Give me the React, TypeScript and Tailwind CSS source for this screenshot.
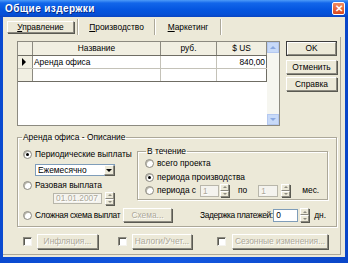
import type { ReactNode } from 'react'

const raised =
  'bg-[#ece9d8] border border-t-white border-l-white border-r-[#8c8a80] border-b-[#8c8a80] shadow-[1px_1px_0_#5a5a52]'
const disabledText = 'text-[#aca899] [text-shadow:1px_1px_0_#ffffff]'

function Radio({ checked, label, className = '' }: { checked?: boolean; label: string; className?: string }) {
  return (
    <div className={'flex items-center h-[11px] ' + className}>
      <span className="w-[9px] h-[9px] shrink-0 rounded-full bg-white border border-[#8c8a80] shadow-[inset_1px_1px_0_#b8b6aa] flex items-center justify-center">
        {checked && <span className="w-[3px] h-[3px] rounded-full bg-black" />}
      </span>
      <span className="ml-[3px] whitespace-nowrap">{label}</span>
    </div>
  )
}

function Check() {
  return (
    <span className="block w-[9px] h-[9px] shrink-0 bg-white border border-t-[#8c8a80] border-l-[#8c8a80] border-r-[#f4f3ee] border-b-[#f4f3ee] shadow-[inset_1px_1px_0_#5a5a52]" />
  )
}

function Spin({ h = 'h-[13px]' }: { h?: string }) {
  return (
    <div className={'w-[9px] flex flex-col ' + h}>
      <div className={'flex-1 flex items-center justify-center ' + raised}>
        <span className="border-x-[2px] border-x-transparent border-b-[2px] border-b-[#8c8a80]" />
      </div>
      <div className={'flex-1 flex items-center justify-center ' + raised}>
        <span className="border-x-[2px] border-x-transparent border-t-[2px] border-t-[#8c8a80]" />
      </div>
    </div>
  )
}

function Btn({ children, disabled, className = '' }: { children: ReactNode; disabled?: boolean; className?: string }) {
  return (
    <div className={'flex items-center justify-center whitespace-nowrap ' + raised + ' ' + (disabled ? disabledText : '') + ' ' + className}>
      {children}
    </div>
  )
}

function Sep() {
  return <div className="w-[2px] h-[16px] border-l border-l-[#aca899] border-r border-r-white" />
}

export default function App() {
  return (
    <div className="w-[348px] h-[263px] overflow-hidden flex flex-col bg-[linear-gradient(to_right,#0a4ad0,#1458e0_50%,#0a46c8)] font-['Liberation_Sans',Arial,sans-serif] text-[8.4px] leading-[11px] text-black">
      {/* title bar */}
      <div className="h-[17px] shrink-0 flex items-center pl-[5px] pr-[3px] bg-[linear-gradient(to_bottom,#4d9bf8_0%,#1266ea_18%,#0556e0_55%,#0650d6_85%,#0a44c0_100%)]">
        <span className="text-white font-bold text-[10px] tracking-[0.4px] [text-shadow:1px_1px_0_#0a2e88]">Общие издержки</span>
        <div className="ml-auto w-[13px] h-[13px] rounded-[2px] border border-white bg-[linear-gradient(to_bottom,#f08a60,#d9471d)] flex items-center justify-center text-white font-bold text-[10px] leading-none">
          ✕
        </div>
      </div>

      <div className="flex-1 mx-[3px] mb-[6px] bg-[#ece9d8] flex flex-col">
        {/* tabs */}
        <div className="h-[20px] shrink-0 flex items-center pl-[4px]">
          <div className={'w-[67px] h-[12px] flex items-center justify-center ' + raised}>
            <span><u>У</u>правление</span>
          </div>
          <div className="w-[3px]" />
          <Sep />
          <div className="w-[75px] text-center"><u>П</u>роизводство</div>
          <Sep />
          <div className="w-[64px] text-center"><u>М</u>аркетинг</div>
          <Sep />
        </div>

        <div className="flex-1 flex flex-col pl-[14px] pt-[4px] border-r border-r-[#aca899] border-b border-b-[#aca899] mr-[4px] mb-[2px]">
          {/* grid + buttons */}
          <div className="flex h-[85px] shrink-0">
            <div className="w-[263px] h-full flex border border-[#8c8a80] bg-white">
              <div className="w-[249px] flex flex-col">
                <div className="h-[14px] flex border-b border-b-[#6f6d64] bg-[#f1efe2]">
                  <div className="w-[15px] border-r border-r-[#8c8a80]" />
                  <div className="w-[128px] border-r border-r-[#8c8a80] text-center leading-[13px]">Название</div>
                  <div className="w-[56px] border-r border-r-[#8c8a80] text-center leading-[13px]">руб.</div>
                  <div className="w-[50px] border-r border-r-[#8c8a80] text-center leading-[13px]">$ US</div>
                </div>
                <div className="h-[13px] flex border-b border-b-[#c4c2b8]">
                  <div className="w-[15px] bg-[#f1efe2] border-r border-r-[#8c8a80] flex items-center pl-[4px]">
                    <span className="border-y-[4px] border-y-transparent border-l-[4px] border-l-black" />
                  </div>
                  <div className="w-[128px] border-r border-r-[#c4c2b8] pl-[1px] leading-[12px]">Аренда офиса</div>
                  <div className="w-[56px] border-r border-r-[#c4c2b8]" />
                  <div className="w-[50px] border-r border-r-[#6f6d64] text-right pr-[1px] leading-[12px]">840,00</div>
                </div>
                <div className="h-[13px] flex border-b border-b-[#6f6d64]">
                  <div className="w-[15px] bg-[#f1efe2] border-r border-r-[#8c8a80]" />
                  <div className="w-[128px] border-r border-r-[#c4c2b8]" />
                  <div className="w-[56px] border-r border-r-[#c4c2b8]" />
                  <div className="w-[50px] border-r border-r-[#6f6d64]" />
                </div>
              </div>
              <div className="w-[12px] flex flex-col bg-[#f6f6f0]">
                <div className="h-[11px] bg-[#c8daf8] border border-[#b4c8f0] flex items-center justify-center">
                  <span className="border-x-[3px] border-x-transparent border-b-[3px] border-b-[#8aa8e0]" />
                </div>
                <div className="flex-1" />
                <div className="h-[11px] bg-[#c8daf8] border border-[#b4c8f0] flex items-center justify-center">
                  <span className="border-x-[3px] border-x-transparent border-t-[3px] border-t-[#8aa8e0]" />
                </div>
              </div>
            </div>
            <div className="ml-[6px] w-[51px] flex flex-col">
              <div className="h-[15px] border border-[#3c3c3c]">
                <Btn className="h-full">OK</Btn>
              </div>
              <Btn className="mt-[4px] h-[14px]">Отменить</Btn>
              <Btn className="mt-[3px] h-[14px]">Справка</Btn>
            </div>
          </div>

          {/* description group */}
          <fieldset className="mt-[6px] w-[320px] min-w-0 border border-[#aca899] shadow-[inset_1px_1px_0_#ffffff,1px_1px_0_#ffffff] pb-[4px]">
            <legend className="ml-[4px] px-[1px]">Аренда офиса - Описание</legend>
            <div className="flex">
              <div className="w-[119px] shrink-0 pl-[5px] flex flex-col">
                <Radio checked label="Периодические выплаты" className="mt-[6px]" />
                <div className="ml-[12px] mt-[4px] w-[80px] h-[12px] flex bg-white border border-[#7f9db9]">
                  <span className="flex-1 pl-[2px] leading-[10px]">Ежемесячно</span>
                  <div className={'w-[10px] flex items-center justify-center ' + raised}>
                    <span className="border-x-[3px] border-x-transparent border-t-[3px] border-t-black" />
                  </div>
                </div>
                <Radio label="Разовая выплата" className="mt-[4px]" />
                <div className="ml-[30px] mt-[1px] flex items-start">
                  <div className={'mt-[1px] w-[49px] h-[11px] border border-[#b8b6aa] bg-[#f4f3ee] pl-[2px] leading-[9px] ' + disabledText}>01.01.2007</div>
                  <div className="ml-[3px]"><Spin /></div>
                </div>
              </div>
              <fieldset className="mt-[3px] w-[191px] min-w-0 shrink-0 border border-[#aca899] shadow-[inset_1px_1px_0_#ffffff,1px_1px_0_#ffffff] pl-[7px] pb-[2px] self-start">
                <legend className="ml-[1px] px-[1px]">В течение</legend>
                <Radio label="всего проекта" className="mt-[1px]" />
                <Radio checked label="периода производства" className="mt-[3px]" />
                <div className="mt-[1px] h-[13px] flex items-center">
                  <Radio label="периода с" />
                  <div className={'ml-[4px] w-[19px] h-[12px] border border-[#b8b6aa] bg-[#f4f3ee] pl-[2px] leading-[10px] ' + disabledText}>1</div>
                  <div className="ml-[1px]"><Spin /></div>
                  <span className="ml-[9px]">по</span>
                  <div className={'ml-[11px] w-[20px] h-[12px] border border-[#b8b6aa] bg-[#f4f3ee] pl-[2px] leading-[10px] ' + disabledText}>1</div>
                  <div className="ml-[3px]"><Spin /></div>
                  <span className="ml-[12px]">мес.</span>
                </div>
              </fieldset>
            </div>
            <div className="mt-[3px] h-[14px] flex items-center pl-[5px]">
              <div className="w-[100px] shrink-0 tracking-[-0.3px]"><Radio label="Сложная схема выплат" /></div>
              <Btn disabled className="w-[49px] h-[14px] shrink-0">Схема...</Btn>
              <span className="ml-[28px] whitespace-nowrap tracking-[-0.4px]">Задержка платежей:</span>
              <div className="ml-auto flex items-center pr-[10px]">
                <div className="w-[25px] h-[13px] bg-white border border-[#7f9db9] pl-[2px] leading-[11px]">0</div>
                <div className="ml-[2px]"><Spin h="h-[14px]" /></div>
                <span className="ml-[5px]">дн.</span>
              </div>
            </div>
          </fieldset>

          {/* bottom options */}
          <div className="mt-[7px] h-[15px] flex items-center pl-[6px]">
            <Check />
            <Btn disabled className="ml-[5px] w-[61px] h-[15px]">Инфляция...</Btn>
            <div className="ml-[20px]"><Check /></div>
            <Btn disabled className="ml-[5px] w-[60px] h-[15px]">Налоги/Учет...</Btn>
            <div className="ml-[25px]"><Check /></div>
            <Btn disabled className="ml-[6px] w-[96px] h-[15px]">Сезонные изменения...</Btn>
          </div>
        </div>
      </div>
    </div>
  )
}
